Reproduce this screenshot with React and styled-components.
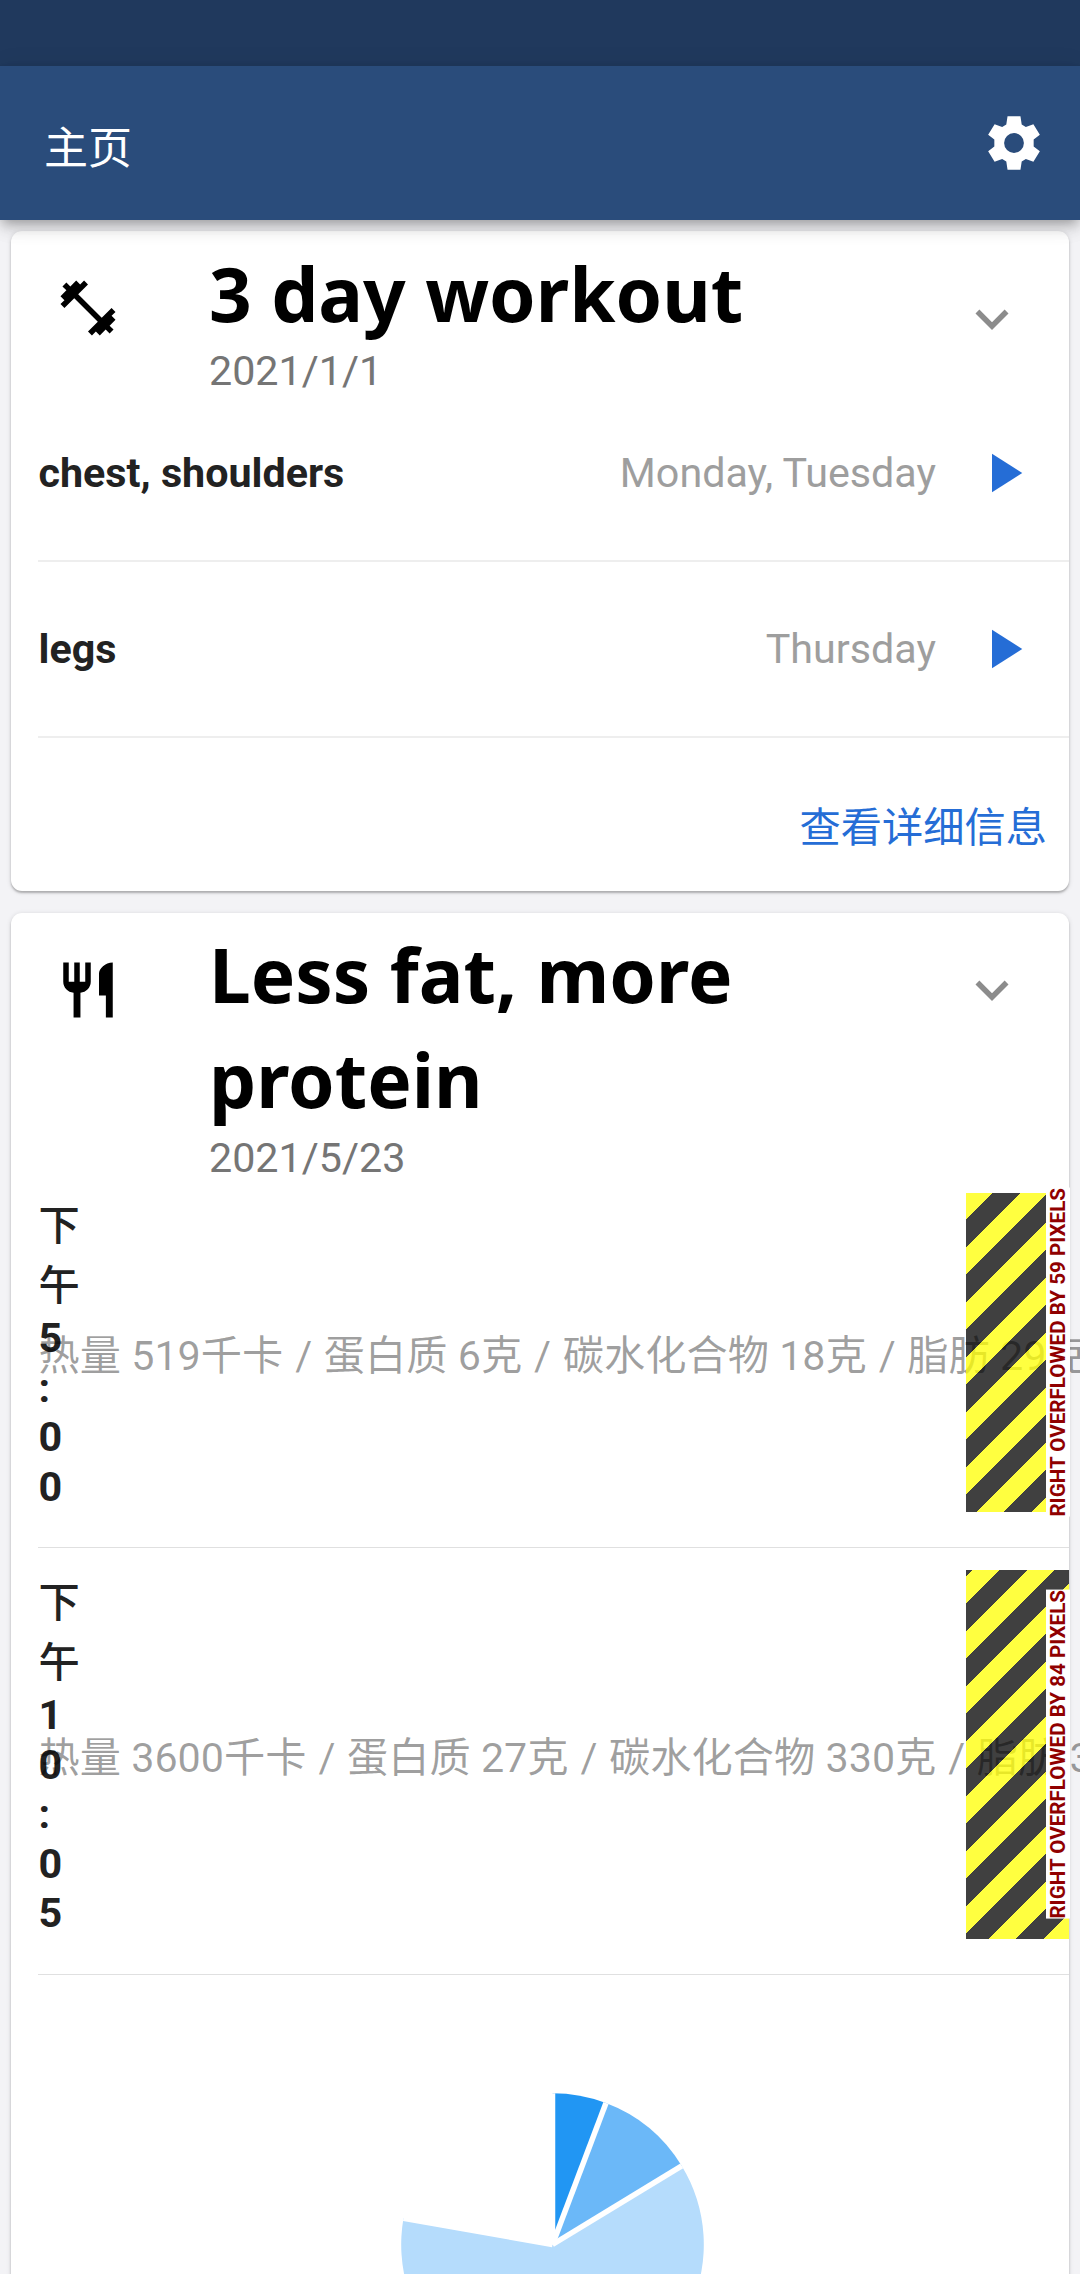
import React from "react";
import styled, { createGlobalStyle } from "styled-components";

const GlobalStyle = createGlobalStyle`
  * { box-sizing: border-box; }
  body {
    margin: 0;
    background: #f3f3f6;
    font-family: Roboto, "Noto Sans CJK SC", sans-serif;
    font-size: 41.25px;
  }
`;

const Screen = styled.div`
  display: flex;
  flex-direction: column;
  width: 1080px;
  height: 2274px;
  overflow: hidden;
  background: #f3f3f6;
`;

const StatusBar = styled.div`
  flex: none;
  height: 66px;
  background: #20395d;
`;

const AppBar = styled.header`
  flex: none;
  position: relative;
  z-index: 2;
  display: flex;
  align-items: center;
  justify-content: space-between;
  height: 154px;
  padding: 0 33px 0 44px;
  background: #2a4c7b;
  color: #fff;
  box-shadow: 0 5px 11px -3px rgba(0, 0, 0, 0.28), 0 10px 14px rgba(0, 0, 0, 0.1),
    0 3px 26px rgba(0, 0, 0, 0.08);
`;

const PageTitle = styled.h1`
  margin: 0;
  padding-top: 11px;
  font-size: 44px;
  font-weight: 400;
  line-height: 64px;
`;

const Content = styled.main`
  display: flex;
  flex-direction: column;
  gap: 22px;
  padding: 11px;
`;

const Card = styled.section`
  flex: none;
  height: ${(p) => p.$height}px;
  border-radius: 11px;
  background: #fff;
  box-shadow: 0 2px 2px rgba(0, 0, 0, 0.22), 0 1px 5px rgba(0, 0, 0, 0.14);
`;

const CardHeader = styled.div`
  display: flex;
  align-items: flex-start;
  height: ${(p) => p.$height}px;
  padding: 0 44px;
`;

const Leading = styled.div`
  width: 154px;
  padding-top: 44px;
`;

const Heading = styled.div`
  flex: 1;
  padding-top: ${(p) => p.$offset}px;
`;

const Trailing = styled.div`
  padding-top: ${(p) => p.$offset}px;
`;

const Title = styled.h2`
  margin: 0;
  font-family: "Noto Sans", "Noto Sans CJK SC", sans-serif;
  font-size: 74.7px;
  font-weight: 700;
  line-height: 105px;
  color: #000;
`;

const DateText = styled.div`
  padding-top: ${(p) => p.$gap}px;
  line-height: 48px;
  color: #757575;
`;

const Icon = styled.svg`
  display: block;
  width: 66px;
  height: 66px;
  fill: ${(p) => p.$color || "#000"};
`;

const WorkoutRow = styled.div`
  display: flex;
  align-items: center;
  height: 176px;
  margin-left: 27px;
  padding-right: 33px;
  border-bottom: 2px solid #eee;
`;

const WorkoutName = styled.span`
  flex: 1;
  padding-left: 0.5px;
  font-weight: 700;
  color: #222;
`;

const Weekdays = styled.span`
  margin-right: 34px;
  color: #9e9e9e;
`;

const CardFooter = styled.div`
  display: flex;
  justify-content: flex-end;
  padding: 60px 22px 0;
`;

const DetailsLink = styled.a`
  line-height: 60px;
  color: #256dd6;
`;

const MealRow = styled.div`
  position: relative;
  display: grid;
  align-items: center;
  margin-left: 27px;
  padding: 22px 0 35px;
  border-bottom: 1px solid #e0e0e0;
`;

const Time = styled.div`
  grid-area: 1 / 1;
  display: flex;
  flex-direction: column;
  padding-left: 0.5px;
  font-weight: 700;
  color: #222;
`;

const TimeChar = styled.span`
  padding-top: ${(p) => (p.$wide ? 5.5 : 0)}px;
  line-height: ${(p) => (p.$wide ? 55 : 49.5)}px;
  font-weight: ${(p) => (p.$wide ? 500 : 700)};
`;

const Macros = styled.div`
  grid-area: 1 / 1;
  width: 0;
  padding-top: 7px;
  padding-left: 0.5px;
  white-space: nowrap;
  line-height: 60px;
  color: rgba(0, 0, 0, 0.38);
`;

const Slash = styled.span`
  margin: 0 1.3px 0 1.7px;
`;

const OverflowStripes = styled.div`
  position: absolute;
  top: 22px;
  right: 0;
  bottom: 35px;
  width: 103px;
  display: flex;
  align-items: center;
  justify-content: flex-end;
  background: repeating-linear-gradient(
    135deg,
    rgba(0, 0, 0, 0.75) ${(p) => p.$phase}px,
    rgba(0, 0, 0, 0.75) ${(p) => p.$phase + 19.445}px,
    rgba(255, 255, 0, 0.75) ${(p) => p.$phase + 19.445}px,
    rgba(255, 255, 0, 0.75) ${(p) => p.$phase + 38.89}px
  );
`;

const OverflowLabel = styled.span`
  flex: none;
  width: 24px;
  margin-right: -1px;
  writing-mode: vertical-rl;
  transform: rotate(180deg);
  background: #fff;
  color: #900000;
  font-size: 20.625px;
  font-weight: 700;
  line-height: 24px;
  white-space: nowrap;
`;

const ChartArea = styled.div`
  display: flex;
  justify-content: center;
  padding: 118px 0 0 25px;
`;

const Pie = styled.svg`
  display: block;
  width: 303px;
  height: 303px;
`;

const paths = {
  gear: "M9.65 2.3h4.7l.45 3 1.5.9 2.75-1.05L21.4 9l-2.25 1.75v2.5L21.4 15l-2.35 3.85-2.75-1.05-1.5.9-.45 3h-4.7l-.45-3-1.5-.9-2.75 1.05L2.6 15l2.25-1.75v-2.5L2.6 9l2.35-3.85L7.7 6.2l1.5-.9zM12 8.4a3.6 3.6 0 1 0 0 7.2 3.6 3.6 0 0 0 0-7.2z",
  dumbbell: "M20.57 14.86L22 13.43 20.57 12 17 15.57 8.43 7 12 3.43 10.57 2 9.14 3.43 7.71 2 5.57 4.14 4.14 2.71 2.71 4.14l1.43 1.43L2 7.71l1.43 1.43L2 10.57 3.43 12 7 8.43 15.57 17 12 20.57 13.43 22l1.43-1.43L16.29 22l2.14-2.14 1.43 1.43 1.43-1.43-1.43-1.43L22 16.29z",
  cutlery: "M11 9H9V2H7v7H5V2H3v7c0 2.12 1.66 3.84 3.75 3.97V22h2.5v-9.03C11.34 12.84 13 11.12 13 9V2h-2v7zm5-3v8h2.5v8H21V2c-2.76 0-5 2.24-5 4z",
  chevron: "M16.59 8.59L12 13.17 7.41 8.59 6 10l6 6 6-6z",
  play: "M8 5v14l11-7z",
};

const Glyph = ({ name, color }) => (
  <Icon viewBox="0 0 24 24" $color={color} aria-hidden="true">
    <path d={paths[name]} fillRule="evenodd" />
  </Icon>
);

const workouts = [
  { name: "chest, shoulders", days: "Monday, Tuesday" },
  { name: "legs", days: "Thursday" },
];

const meals = [
  {
    time: "下午5:00",
    macros: ["热量 519千卡", "蛋白质 6克", "碳水化合物 18克", "脂肪 29克"],
    overflow: 59,
    phase: 18.9,
  },
  {
    time: "下午10:05",
    macros: ["热量 3600千卡", "蛋白质 27克", "碳水化合物 330克", "脂肪 30克"],
    overflow: 84,
    phase: 24,
  },
];

const slices = [
  { from: 0, to: 20.7, color: "#2196f3" },
  { from: 20.7, to: 58.7, color: "#6bb8f8" },
  { from: 58.7, to: 280, color: "#b5dcfc" },
];

const R = 151.3;
const point = (deg) => {
  const a = (deg * Math.PI) / 180;
  return `${(R * Math.sin(a)).toFixed(2)} ${(-R * Math.cos(a)).toFixed(2)}`;
};

const isWide = (ch) => ch > "\u2fff";

export default function App() {
  return (
    <>
      <GlobalStyle />
      <Screen>
        <StatusBar />
        <AppBar>
          <PageTitle>主页</PageTitle>
          <Glyph name="gear" color="#fff" />
        </AppBar>
        <Content>
          <Card $height={660}>
            <CardHeader $height={155}>
              <Leading>
                <Glyph name="dumbbell" />
              </Leading>
              <Heading $offset={10}>
                <Title>3 day workout</Title>
                <DateText $gap={0.5}>2021/1/1</DateText>
              </Heading>
              <Trailing $offset={55}>
                <Glyph name="chevron" color="#8c8c8c" />
              </Trailing>
            </CardHeader>
            {workouts.map((w) => (
              <WorkoutRow key={w.name}>
                <WorkoutName>{w.name}</WorkoutName>
                <Weekdays>{w.days}</Weekdays>
                <Glyph name="play" color="#256dd6" />
              </WorkoutRow>
            ))}
            <CardFooter>
              <DetailsLink>查看详细信息</DetailsLink>
            </CardFooter>
          </Card>
          <Card $height={1500}>
            <CardHeader $height={258}>
              <Leading>
                <Glyph name="cutlery" />
              </Leading>
              <Heading $offset={9}>
                <Title>Less fat, more protein</Title>
                <DateText $gap={1.5}>2021/5/23</DateText>
              </Heading>
              <Trailing $offset={44}>
                <Glyph name="chevron" color="#8c8c8c" />
              </Trailing>
            </CardHeader>
            {meals.map((m) => (
              <MealRow key={m.time}>
                <Time>
                  {[...m.time].map((ch, i) => (
                    <TimeChar key={i} $wide={isWide(ch)}>
                      {ch}
                    </TimeChar>
                  ))}
                </Time>
                <Macros>
                  {m.macros.map((part, i) => (
                    <React.Fragment key={part}>
                      {i > 0 && <> <Slash>/</Slash> </>}
                      {part}
                    </React.Fragment>
                  ))}
                </Macros>
                <OverflowStripes $phase={m.phase}>
                  <OverflowLabel>RIGHT OVERFLOWED BY {m.overflow} PIXELS</OverflowLabel>
                </OverflowStripes>
              </MealRow>
            ))}
            <ChartArea>
              <Pie viewBox="-151.5 -151.5 303 303">
                {slices.map((s) => (
                  <path
                    key={s.from}
                    d={`M0 0L${point(s.from)}A${R} ${R} 0 ${s.to - s.from > 180 ? 1 : 0} 1 ${point(s.to)}Z`}
                    fill={s.color}
                  />
                ))}
                {[0, 20.7, 58.7, 280].map((deg) => (
                  <path key={deg} d={`M0 0L${point(deg)}`} stroke="#fff" strokeWidth="5.5" />
                ))}
              </Pie>
            </ChartArea>
          </Card>
        </Content>
      </Screen>
    </>
  );
}
